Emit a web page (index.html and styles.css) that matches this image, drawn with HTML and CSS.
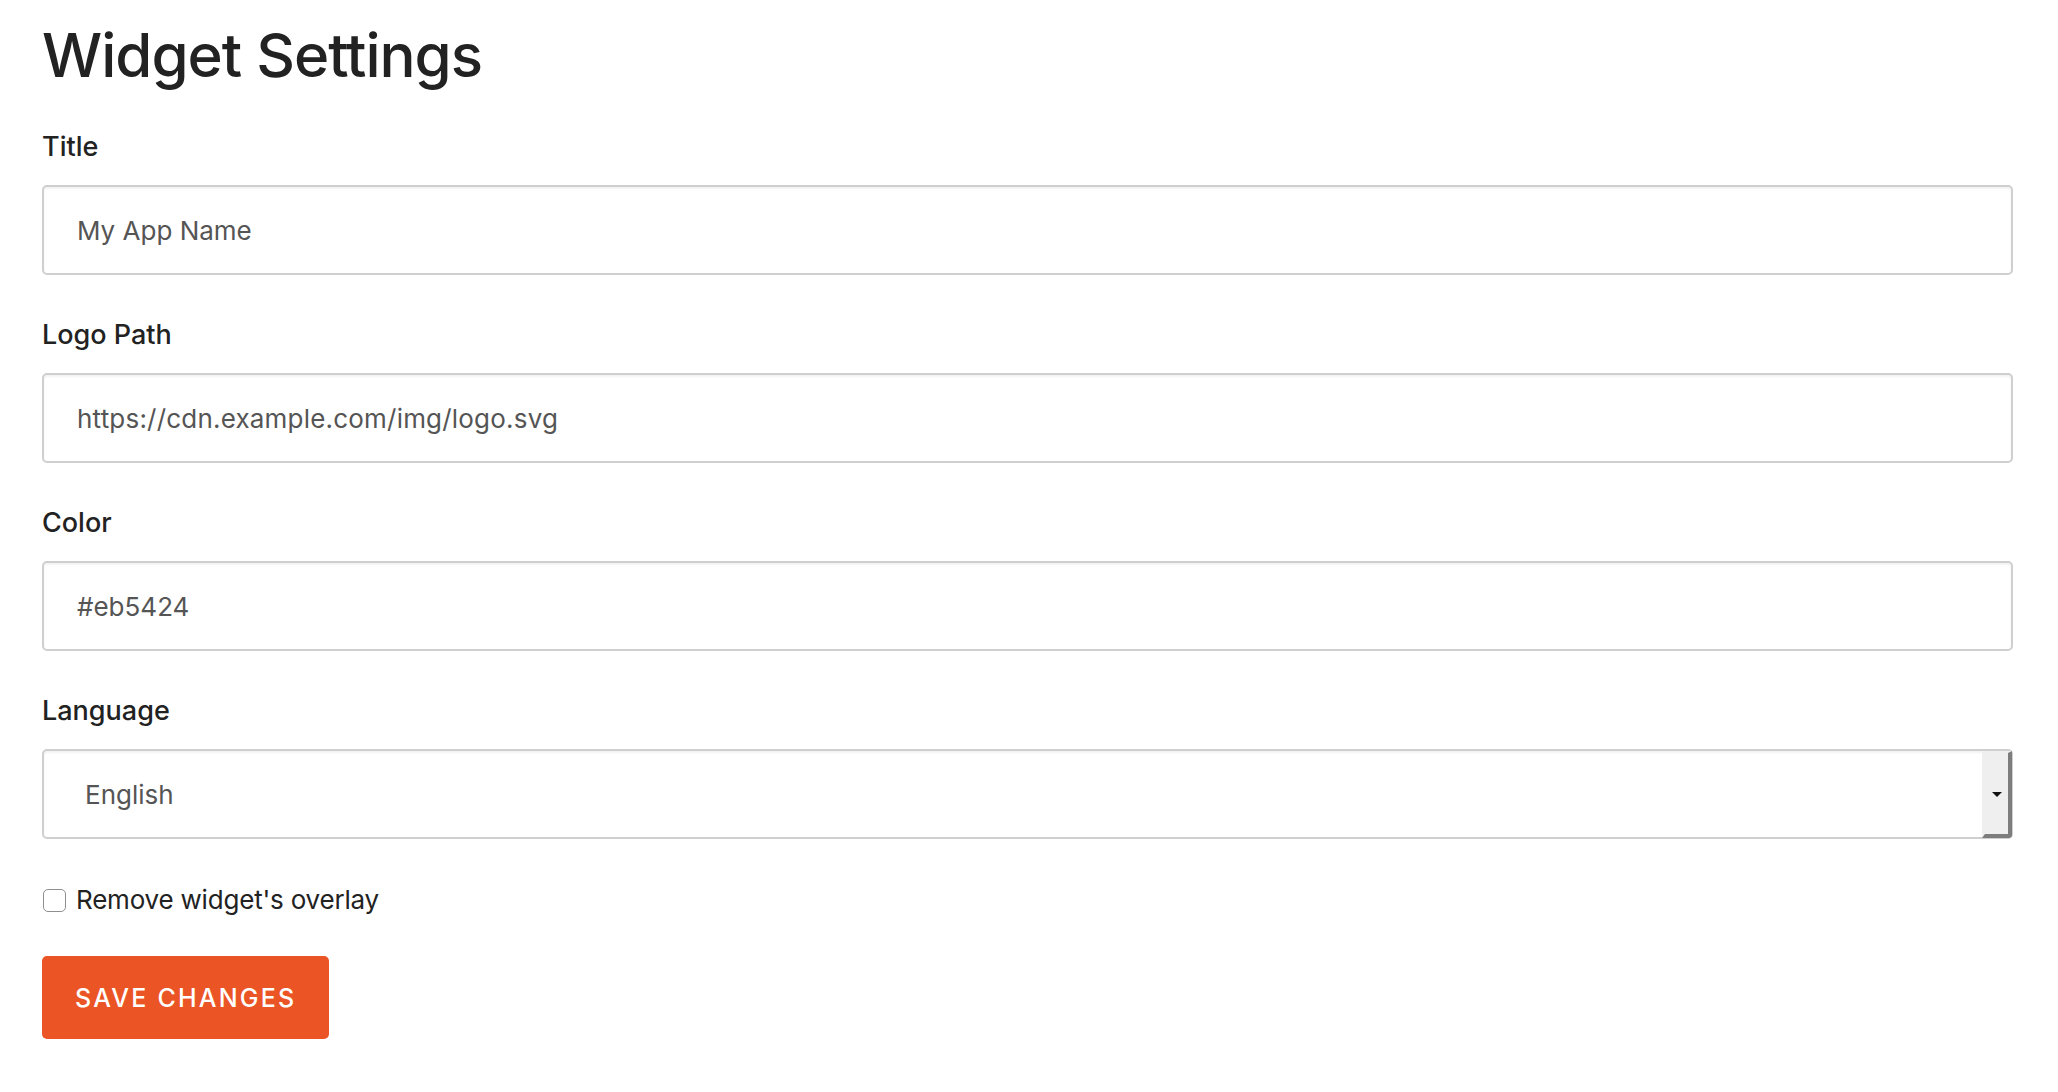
FILE: index.html
```html
<!DOCTYPE html>
<html lang="en">
<head>
<meta charset="utf-8">
<title>Widget Settings</title>
<link rel="stylesheet" href="styles.css">
</head>
<body>
<main class="page">
  <h1 class="heading">Widget Settings</h1>
  <form class="form">
    <div class="field">
      <label class="label" for="title">Title</label>
      <input class="input" id="title" type="text" value="My App Name">
    </div>
    <div class="field">
      <label class="label" for="logo">Logo Path</label>
      <input class="input" id="logo" type="text" value="https://cdn.example.com/img/logo.svg">
    </div>
    <div class="field">
      <label class="label" for="color">Color</label>
      <input class="input" id="color" type="text" value="#eb5424">
    </div>
    <div class="field">
      <label class="label" for="lang">Language</label>
      <div class="select-wrap">
        <select class="input select" id="lang">
          <option>English</option>
        </select>
        <span class="select-btn"><span class="select-arrow"></span></span>
      </div>
    </div>
    <label class="check-row">
      <input class="checkbox" type="checkbox">
      <span class="check-text">Remove widget's overlay</span>
    </label>
    <button class="btn" type="button">SAVE CHANGES</button>
  </form>
</main>
</body>
</html>
```

FILE: styles.css
```css
* { box-sizing: border-box; }

html, body {
  margin: 0;
  padding: 0;
  background: #ffffff;
}

body {
  font-family: Inter, "Noto Sans", "Liberation Sans", sans-serif;
  color: #222222;
}

.page {
  padding: 18px 45px 0 42px;
}

.heading {
  margin: 0;
  font-size: 60px;
  line-height: 74px;
  font-weight: 500;
  color: #222222;
  letter-spacing: -1px;
}

.form {
  display: flex;
  flex-direction: column;
  margin-top: 37px;
}

.field {
  display: flex;
  flex-direction: column;
  margin-bottom: 42px;
}

.label {
  font-size: 27px;
  line-height: 36px;
  font-weight: 500;
  color: #222222;
  margin-bottom: 20px;
}

.input {
  display: block;
  width: 100%;
  height: 90px;
  margin: 0;
  padding: 0 33px;
  font-family: inherit;
  font-size: 26px;
  color: #555555;
  background: #ffffff;
  border: 2px solid #cfcfcf;
  border-radius: 5px;
  box-shadow: inset 0 2px 2px rgba(0, 0, 0, 0.05);
  outline: none;
}

#logo {
  letter-spacing: 0.2px;
}

.select-wrap {
  position: relative;
}

.select {
  appearance: none;
  -webkit-appearance: none;
  padding-left: 41px;
}

.select-btn {
  position: absolute;
  top: 2px;
  right: 1px;
  bottom: 1px;
  width: 30px;
  background: #efefef;
  border-left: 3px solid #efefef;
  border-top: 2px solid #efefef;
  border-right: 4px solid #7d7d7d;
  border-bottom: 4px solid #7d7d7d;
  border-bottom-right-radius: 4px;
  display: flex;
  align-items: center;
  justify-content: center;
}

.select-arrow {
  width: 0;
  height: 0;
  border-left: 5px solid transparent;
  border-right: 5px solid transparent;
  border-top: 5px solid #111111;
  margin-top: 1px;
}

.check-row {
  display: flex;
  align-items: center;
  gap: 10px;
  margin-top: 1px;
  font-size: 26px;
  line-height: 36px;
  color: #222222;
}

.checkbox {
  appearance: none;
  -webkit-appearance: none;
  width: 23px;
  height: 23px;
  margin: 0 0 0 1px;
  border: 1.5px solid #8f8f8f;
  border-radius: 5px;
  background: #ffffff;
}

.check-text {
  letter-spacing: -0.2px;
}

.btn {
  align-self: flex-start;
  margin-top: 38px;
  height: 83px;
  padding: 0 33px;
  border: none;
  border-radius: 5px;
  background: #eb5424;
  color: #ffffff;
  font-family: inherit;
  font-size: 25px;
  font-weight: 500;
  letter-spacing: 2.2px;
}
```
